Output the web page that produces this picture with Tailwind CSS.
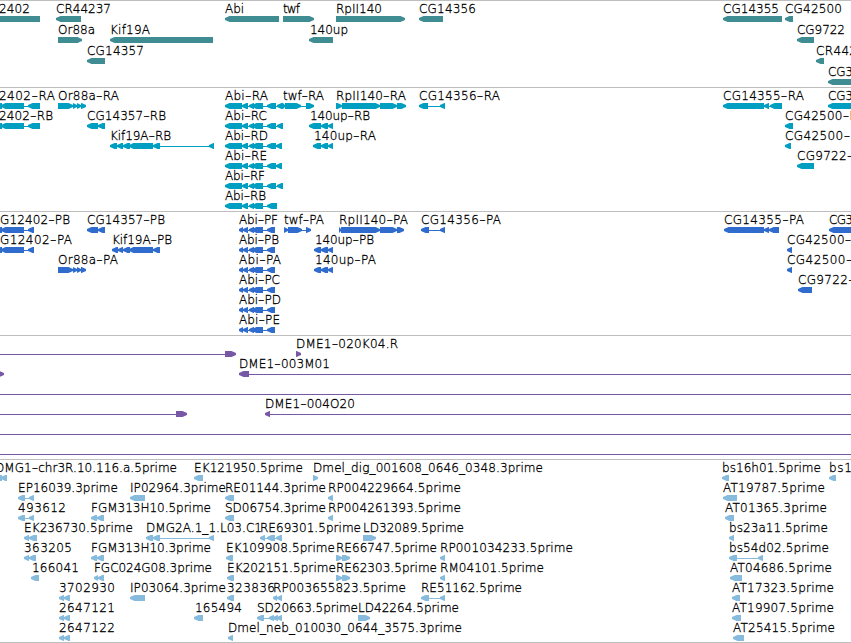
<!DOCTYPE html>
<html lang="en">
<head>
<meta charset="utf-8">
<title>Genome browser</title>
<script src="https://cdn.jsdelivr.net/npm/@tailwindcss/browser@4"></script>
</head>
<body class="bg-white overflow-hidden">
<main class="flex w-[851px] h-[643px] flex-col overflow-hidden border-b border-[#bebebe] bg-white font-['DejaVu_Sans',sans-serif] text-[12px] font-extralight text-black">
  <section class="h-[87px] shrink-0 border-t border-[#bebebe] text-[#3f8d93]"><svg id="genes" class="block h-[86px] w-[851px]" viewBox="0 1 851 86"></svg></section>
  <section class="h-[124px] shrink-0 border-t border-[#bebebe] text-[#009fc1]"><svg id="transcripts" class="block h-[123px] w-[851px]" viewBox="0 88 851 123"></svg></section>
  <section class="h-[124px] shrink-0 border-t border-[#bebebe] text-[#306bce]"><svg id="proteins" class="block h-[123px] w-[851px]" viewBox="0 212 851 123"></svg></section>
  <section class="h-[124px] shrink-0 border-t border-[#bebebe] text-[#7858a6]"><svg id="clones" class="block h-[123px] w-[851px]" viewBox="0 336 851 123"></svg></section>
  <section class="h-[183px] shrink-0 border-t border-[#bebebe] text-[#86bbdd]"><svg id="ests" class="block h-[182px] w-[851px]" viewBox="0 460 851 182"></svg></section>
</main>
<script>
// Each row: labels as "text@start:end" and features as "L|R start,end start,end ..."
const tracks = {
  genes: { top: 16, pitch: 21, rows: [
    ["2402@-1:30;CR44237@56:111;Abi@225:244;twf@283:300;RpII140@336:382;CG14356@419:476;CG14355@723:779;CG42500@785:842",
     "L -6,40;L 56,81;L 225,279;R 283,314;R 336,405;L 419,443;L 723,782;L 785,793"],
    ["Or88a@58:95;Kif19A@110:150;140up@310:348;CG9722@797:845", "R 58,82;L 110,213;L 309,333;L 797,814"],
    ["CG14357@87:144;CR442@816:857", "L 87,105;L 816,824"],
    ["CG3@828:853", "L 828,860"]] },
  transcripts: { top: 103, pitch: 20, rows: [
    ["2402-RA@-1:55;Or88a-RA@58:119;Abi-RA@225:268;twf-RA@283:324;RpII140-RA@336:406;CG14356-RA@419:500;CG14355-RA@723:804;CG3@828:853",
     "L -4,2 1,24 28,40;R 58,73 73,77 77,81 81,86;L 225,242 242,248 249,254 252,263 267,276 277,283;R 283,285 285,301 306,314;R 336,342 342,380 380,397 397,406;L 419,428 440,445;L 723,764 764,769 770,782;L 828,860"],
    ["2402-RB@-1:53;CG14357-RB@87:166;Abi-RC@225:267;140up-RB@310:370;CG42500-RB@785:866",
     "L -4,2 1,24 28,40;L 87,98 98,105;L 225,242 242,248 249,254 252,263 267,276 277,283;L 309,321 321,328 328,333;L 785,793"],
    ["Kif19A-RB@110:171;Abi-RD@225:268;140up-RA@314:376;CG42500-RA@785:867",
     "L 110,117 117,123 123,130 129,153 153,160 209,214;L 225,242 242,248 249,254 252,263 267,276 276,282;L 313,321 321,328 328,333;L 785,791"],
    ["Abi-RE@225:267;CG9722-RA@797:870", "L 225,242 242,248 249,254 252,263 267,276 276,282;L 797,814"],
    ["Abi-RF@225:265", "L 225,242 242,248 249,254 252,263 267,276 277,283"],
    ["Abi-RB@225:266", "L 225,242 242,248 249,254 252,263 267,277"]] },
  proteins: { top: 227, pitch: 20, rows: [
    ["G12402-PB@0:70;CG14357-PB@87:165;Abi-PF@239:278;twf-PA@284:324;RpII140-PA@339:408;CG14356-PA@421:501;CG14355-PA@724:804;CG3@829:853",
     "L -4,2 1,24 28,34;L 87,98 98,105;L 239,243 243,248 249,254 252,263 267,275;R 284,288 288,302 306,311;R 339,341 341,380 380,397 397,404;L 421,429 440,445;L 724,764 764,769 769,779;L 829,860"],
    ["G12402-PA@0:72;Kif19A-PB@112:172;Abi-PB@239:279;140up-PB@315:374;CG42500-PB@787:867",
     "L -4,2 1,24 28,34;L 112,118 118,123 123,130 129,153 153,160;L 239,243 243,248 249,254 252,263 267,275;L 314,321 321,328 328,333;L 787,792"],
    ["Or88a-PA@58:118;Abi-PA@239:281;140up-PA@315:376;CG42500-PA@787:868",
     "R 58,73 73,77 77,81 81,86;L 239,243 243,248 249,254 252,263 267,275;L 314,321 321,328 328,333;L 787,792"],
    ["Abi-PC@239:280;CG9722-PA@798:870", "L 239,243 243,248 249,254 252,263 267,275;L 798,812"],
    ["Abi-PD@239:281", "L 239,243 243,248 249,254 252,263 267,275"],
    ["Abi-PE@239:280", "L 239,243 243,248 249,254 252,263 267,275"]] },
  clones: { top: 351, pitch: 20, rows: [
    ["DME1-020K04.R@296:398", "R -9,-6 225,236;R 296,301"],
    ["DME1-003M01@239:330", "R -5,4;L 239,249 860,865"],
    ["", "L -9,-4 860,865"],
    ["DME1-004O20@265:355", "R -9,-6 176,187;L 265,270 860,865"],
    ["", "L -9,-4 860,865"],
    ["", "L -9,-4 860,865"]] },
  ests: { top: 475, pitch: 20, rows: [
    ["DMG1-chr3R.10.116.a.5prime@-5:177;EK121950.5prime@194:303;Dmel_dig_001608_0646_0348.3prime@313:543;bs16h01.5prime@722:821;bs1@829:852",
     "L -4,2 1,7;L 194,203;R 313,318;L 722,729;L 829,836"],
    ["EP16039.3prime@18:118;IP02964.3prime@130:226;RE01144.3prime@225:326;RP004229664.5prime@328:461;AT19787.5prime@723:825",
     "L 18,25 29,34;L 130,145;L 225,234;L 328,333;L 723,737"],
    ["493612@18:66;FGM313H10.5prime@91:211;SD06754.3prime@225:326;RP004261393.5prime@328:461;AT01365.3prime@725:827",
     "L 18,25 29,34;L 91,97 97,104;L 225,234;L 328,333;L 725,734"],
    ["EK236730.5prime@24:133;DMG2A.1_1.L03.C1@146:262;RE69301.5prime@260:361;LD32089.5prime@363:464;bs23a11.5prime@729:828",
     "L 24,29 29,37;L 146,153 153,160 209,214;L 260,265 267,275 276,282;R 363,376;L 729,734"],
    ["363205@24:72;FGM313H10.3prime@91:211;EK109908.5prime@226:335;RE66747.5prime@336:437;RP001034233.5prime@440:573;bs54d02.5prime@729:829",
     "L 24,29 29,36;L 91,97 97,104;L 226,233;R 336,342 342,350;L 440,445;L 729,737 758,763"],
    ["166041@32:79;FGC024G08.3prime@94:212;EK202151.5prime@227:336;RE62303.5prime@336:437;RM04101.5prime@440:544;AT04686.5prime@730:832",
     "L 31,39;L 94,98 98,104;L 227,234;R 336,342 342,350;L 440,445;L 730,742"],
    ["3702930@59:115;IP03064.3prime@130:226;323836@227:275;RP003655823.5prime@273:406;RE51162.5prime@421:522;AT17323.5prime@732:834",
     "L 59,64 64,70;L 130,145;L 227,234;L 273,277 277,282;L 421,429 440,445;L 732,740"],
    ["2647121@59:115;165494@195:242;SD20663.5prime@257:358;LD42264.5prime@358:459;AT19907.5prime@732:834",
     "L 59,64 64,70;L 194,203;L 257,264 269,274 273,278 277,282;R 358,370;L 732,741"],
    ["2647122@59:115;Dmel_neb_010030_0644_3575.3prime@228:462;AT25415.5prime@733:835",
     "L 59,64 64,70;L 228,233;L 733,744"]] }
};
for (const [id, t] of Object.entries(tracks)) {
  let shapes = "", labels = "";
  t.rows.forEach(([names, feats], row) => {
    const y = t.top + row * t.pitch;
    for (const f of feats.split(";")) {
      const [dir, ...rest] = f.split(" ");
      const segs = rest.map(s => s.split(",").map(Number));
      const first = segs[0][0], last = segs[segs.length - 1][1];
      if (segs.length > 1) shapes += `<rect x="${first + 1}" y="${y + 3}" width="${last - first - 2}" height="1"/>`;
      for (const [a, b] of segs) {
        const h = Math.min(4.5, b - a);
        shapes += dir === "L"
          ? `<path d="M${a} ${y + 2}L${a + h} ${y}H${b}V${y + 6}H${a + h}L${a} ${y + 4}Z"/>`
          : `<path d="M${b} ${y + 2}L${b - h} ${y}H${a}V${y + 6}H${b - h}L${b} ${y + 4}Z"/>`;
      }
    }
    for (const n of names.split(";").filter(Boolean)) {
      const [text, pos] = n.split("@"), [a, b] = pos.split(":").map(Number);
      // The hyphen is drawn wider than the surrounding letters' own
      const body = text.replace(/-(.*)/, '<tspan class="text-[18px]" dy="1">-</tspan><tspan dy="-1">$1</tspan>');
      labels += `<text x="${a}" y="${y - 3}" textLength="${b - a}" lengthAdjust="spacing">${body}</text>`;
    }
  });
  document.getElementById(id).innerHTML = `<g fill="currentColor">${shapes}</g><g class="fill-black stroke-black stroke-[0.3px]">${labels}</g>`;
}
</script>
</body>
</html>
